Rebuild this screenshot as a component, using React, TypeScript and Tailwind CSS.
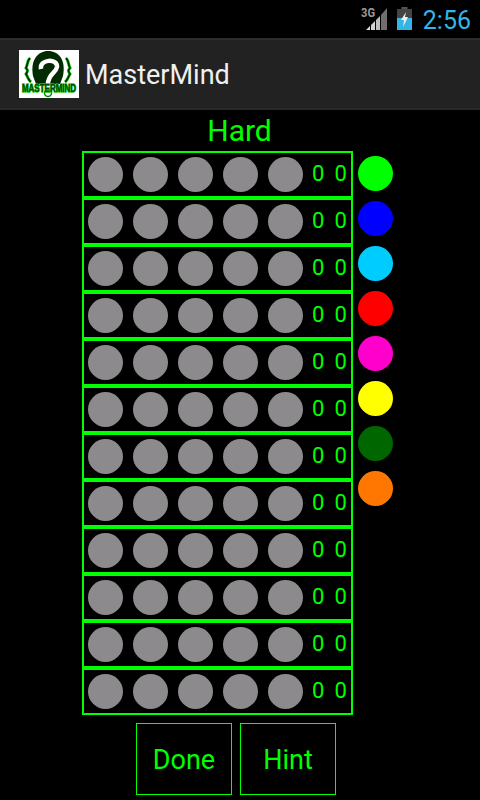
const rows = Array.from({ length: 12 }, (_, i) => i);
const pegs = [0, 1, 2, 3, 4];
const palette = [
  "bg-[#00ff00]",
  "bg-[#0000ff]",
  "bg-[#00ccff]",
  "bg-[#ff0000]",
  "bg-[#ff00cc]",
  "bg-[#ffff00]",
  "bg-[#006600]",
  "bg-[#ff7700]",
];

const StatusIcons = () => (
  <div className="flex items-end pb-[2px]">
    <svg width="27" height="24" viewBox="0 0 27 24">
      <polygon points="5,24 9,20 9,24" fill="#dddddd" />
      <polygon points="10,24 10,19 14,15 14,24" fill="#cfcfcf" />
      <polygon points="15,24 15,14 19,10 19,24" fill="#bdbdbd" />
      <polygon points="20,24 20,9 26,2 26,24" fill="#6f6f6f" />
      <text x="0" y="11" fontSize="12" fontWeight="700" fill="#9a9a9a" textLength="14" lengthAdjust="spacingAndGlyphs" fontFamily="Roboto, sans-serif">3G</text>
    </svg>
    <svg width="15" height="23" viewBox="0 0 15 23" className="ml-[9px]">
      <rect x="4.5" y="0" width="6" height="3" fill="#555555" />
      <rect x="0" y="2" width="15" height="21" fill="#444444" />
      <rect x="0" y="11" width="15" height="12" fill="#33b5e5" />
      <polygon points="9,5 4,13 7,13 6,20 11,10 8,10" fill="#efefef" />
    </svg>
  </div>
);

const Logo = () => (
  <svg width="60" height="48" viewBox="0 0 60 48" className="bg-white shrink-0">
    <path d="M14 26 C11 10 19 1 29 1 C40 1 47 10 44 26 L41 34 L17 34 Z" fill="#022b02" />
    <path d="M11 8 C8 11 9 14 7 18 C9 20 9 21 7 24 C9 27 9 30 12 32" fill="none" stroke="#00c000" strokeWidth="3" />
    <path d="M11 8 C8 11 9 14 7 18 C9 20 9 21 7 24 C9 27 9 30 12 32" fill="none" stroke="#002200" strokeWidth="1.5" />
    <path d="M47 8 C50 11 49 14 51 18 C49 20 49 21 51 24 C49 27 49 30 46 32" fill="none" stroke="#00c000" strokeWidth="3" />
    <path d="M47 8 C50 11 49 14 51 18 C49 20 49 21 51 24 C49 27 49 30 46 32" fill="none" stroke="#002200" strokeWidth="1.5" />
    <path d="M22 19 C20 9 39 8 38 17 C37 23 29 24 29 34" fill="none" stroke="#ffffff" strokeWidth="4.5" />
    <circle cx="29" cy="43" r="3.5" fill="#ffffff" stroke="#0a8a0a" strokeWidth="1.5" />
    <text transform="translate(30 42) scale(1 1.35)" textAnchor="middle" fontSize="8" fontWeight="700" fill="#024a02" stroke="#12c012" strokeWidth="1" paintOrder="stroke" fontFamily="Liberation Sans, sans-serif">MASTERMIND</text>
  </svg>
);

export default function App() {
  return (
    <div className="w-[480px] h-[800px] bg-black flex flex-col overflow-hidden font-['Roboto',sans-serif]">
      <div className="h-[38px] shrink-0 flex items-center justify-end pr-[9px] gap-[11px]">
        <StatusIcons />
        <span className="text-[25px] leading-none text-[#33b5e5] pt-[2px]">2:56</span>
      </div>
      <div className="h-[72px] shrink-0 bg-[#222222] flex items-center pl-[19px] gap-[6px] border-t-2 border-t-[#2c2c2c] border-b-2 border-b-[#282828]">
        <Logo />
        <span className="text-[27px] leading-none text-[#f0f0f0] pt-[3px]">MasterMind</span>
      </div>
      <div className="h-[41px] shrink-0 flex items-center justify-center">
        <span className="text-[30px] leading-none text-[#00ff00] pr-[1px]">Hard</span>
      </div>
      <div className="flex pl-[82px] gap-[5px]">
        <div className="flex flex-col">
          {rows.map((row) => (
            <div
              key={row}
              className="w-[271px] h-[47px] border-2 border-[#00ff00] flex items-center pl-[4px]"
            >
              <div className="flex gap-[10px]">
                {pegs.map((peg) => (
                  <div key={peg} className="w-[35px] h-[35px] rounded-full bg-[#8c8a8c]" />
                ))}
              </div>
              <div className="flex ml-[9px] gap-[10px] text-[22px] leading-none text-[#00ff00] pb-[2px]">
                <span>0</span>
                <span>0</span>
              </div>
            </div>
          ))}
        </div>
        <div className="flex flex-col gap-[10px] pt-[5px]">
          {palette.map((color) => (
            <div key={color} className={`w-[35px] h-[35px] rounded-full ${color}`} />
          ))}
        </div>
      </div>
      <div className="flex justify-start pl-[136px] gap-[8px] mt-[8px]">
        <button type="button" className="w-[96px] h-[72px] border border-[#00ff00] text-[27px] text-[#00ff00] pt-[3px]">
          Done
        </button>
        <button type="button" className="w-[96px] h-[72px] border border-[#00ff00] text-[27px] text-[#00ff00] pt-[3px]">
          Hint
        </button>
      </div>
    </div>
  );
}
